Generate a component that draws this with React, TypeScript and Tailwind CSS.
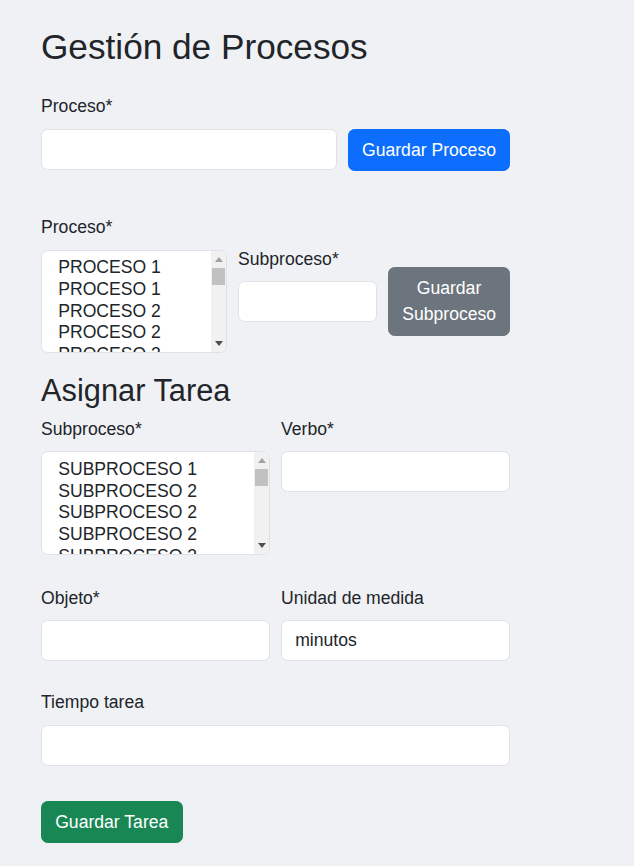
const procesos = ['PROCESO 1', 'PROCESO 1', 'PROCESO 2', 'PROCESO 2', 'PROCESO 3']
const subprocesos = ['SUBPROCESO 1', 'SUBPROCESO 2', 'SUBPROCESO 2', 'SUBPROCESO 2', 'SUBPROCESO 3']

const Label = ({children, className = ''}: {children: string; className?: string}) => (
  <label className={`block text-[17.6px] leading-[26.4px] text-[#212529] ${className}`}>{children}</label>
)

const Input = ({value, className = ''}: {value?: string; className?: string}) => (
  <input
    type="text"
    defaultValue={value}
    className={`block h-[41px] rounded-[6.6px] border-[1.1px] border-[#dee2e6] bg-white px-[13.2px] font-[family-name:Liberation_Sans,Arial,sans-serif] text-[17.6px] text-[#212529] outline-none ${className}`}
  />
)

// lista multiple con barra de scroll clásica
const ListBox = ({items, className = ''}: {items: string[]; className?: string}) => (
  <div className={`flex h-[103.4px] overflow-hidden rounded-[6.6px] border-[1.1px] border-[#dee2e6] bg-white ${className}`}>
    <div className="flex-1 overflow-hidden py-[6.6px] pl-[13.2px] pr-[13.2px]">
      {items.map((item, i) => (
        <div key={i} className="whitespace-nowrap pl-[3px] pb-[1.5px] text-[17.6px] leading-[20.2px] text-[#212529]">
          {item}
        </div>
      ))}
    </div>
    <div className="flex w-[15px] flex-none flex-col bg-[#f1f1f1]">
      <div className="flex h-[17px] items-center justify-center">
        <svg width="8" height="5" viewBox="0 0 8 5">
          <path d="M0 5 L4 0 L8 5 Z" fill="#a3a3a3" />
        </svg>
      </div>
      <div className="mx-auto h-[17px] w-[12.5px] bg-[#c1c1c1]" />
      <div className="flex-1" />
      <div className="flex h-[17px] items-center justify-center">
        <svg width="8" height="5" viewBox="0 0 8 5">
          <path d="M0 0 L8 0 L4 5 Z" fill="#505050" />
        </svg>
      </div>
    </div>
  </div>
)

export default function App() {
  return (
    <div className="min-h-screen bg-[#f0f1f5] pt-[26px] font-[family-name:Liberation_Sans,Arial,sans-serif] text-[#212529]">
      <div className="ml-[41px] w-[469px]">
        <h2 className="text-[35.2px] leading-[42.2px] font-medium">Gestión de Procesos</h2>

        {/* Proceso */}
        <Label className="mt-[24.8px] mb-[10px]">Proceso*</Label>
        <div className="flex gap-[11px]">
          <Input className="w-[296px] h-[41.8px]" />
          <button className="h-[41.8px] w-[162px] rounded-[6.6px] border-[1.1px] border-[#0d6efd] bg-[#0d6efd] text-[17.6px] leading-[26.4px] text-white">
            Guardar Proceso
          </button>
        </div>

        {/* Subproceso */}
        <div className="mt-[42.8px] flex items-start gap-[11px]">
          <div className="w-[186px]">
            <Label className="mb-[9.3px]">Proceso*</Label>
            <ListBox items={procesos} />
          </div>
          <div className="mt-[31.7px] w-[139px]">
            <Label className="mb-[8.6px]">Subproceso*</Label>
            <Input className="w-full" />
          </div>
          <button className="mt-[53.4px] h-[68.2px] w-[122px] rounded-[6.6px] border-[1.1px] border-[#6c757d] bg-[#6c757d] px-[13.2px] text-[17.6px] leading-[26.4px] text-white">
            Guardar Subproceso
          </button>
        </div>

        {/* Asignar tarea */}
        <h3 className="mt-[19px] text-[30.8px] leading-[37px] font-medium">Asignar Tarea</h3>
        <div className="mt-[6.6px] grid grid-cols-2 gap-x-[11px]">
          <div>
            <Label className="mb-[9.3px]">Subproceso*</Label>
            <ListBox items={subprocesos} />
          </div>
          <div>
            <Label className="mb-[9.3px]">Verbo*</Label>
            <Input className="w-full" />
          </div>
        </div>

        <div className="mt-[29.9px] grid grid-cols-2 gap-x-[11px]">
          <div>
            <Label className="mb-[8.6px]">Objeto*</Label>
            <Input className="w-full" />
          </div>
          <div>
            <Label className="mb-[8.6px]">Unidad de medida</Label>
            <Input className="w-full" value="minutos" />
          </div>
        </div>

        <Label className="mt-[28.3px] mb-[9.3px]">Tiempo tarea</Label>
        <Input className="w-full" />

        <button className="mt-[35.7px] h-[41.7px] rounded-[6.6px] border-[1.1px] border-[#198754] bg-[#198754] px-[13.2px] text-[17.6px] leading-[26.4px] text-white">
          Guardar Tarea
        </button>
      </div>
    </div>
  )
}
